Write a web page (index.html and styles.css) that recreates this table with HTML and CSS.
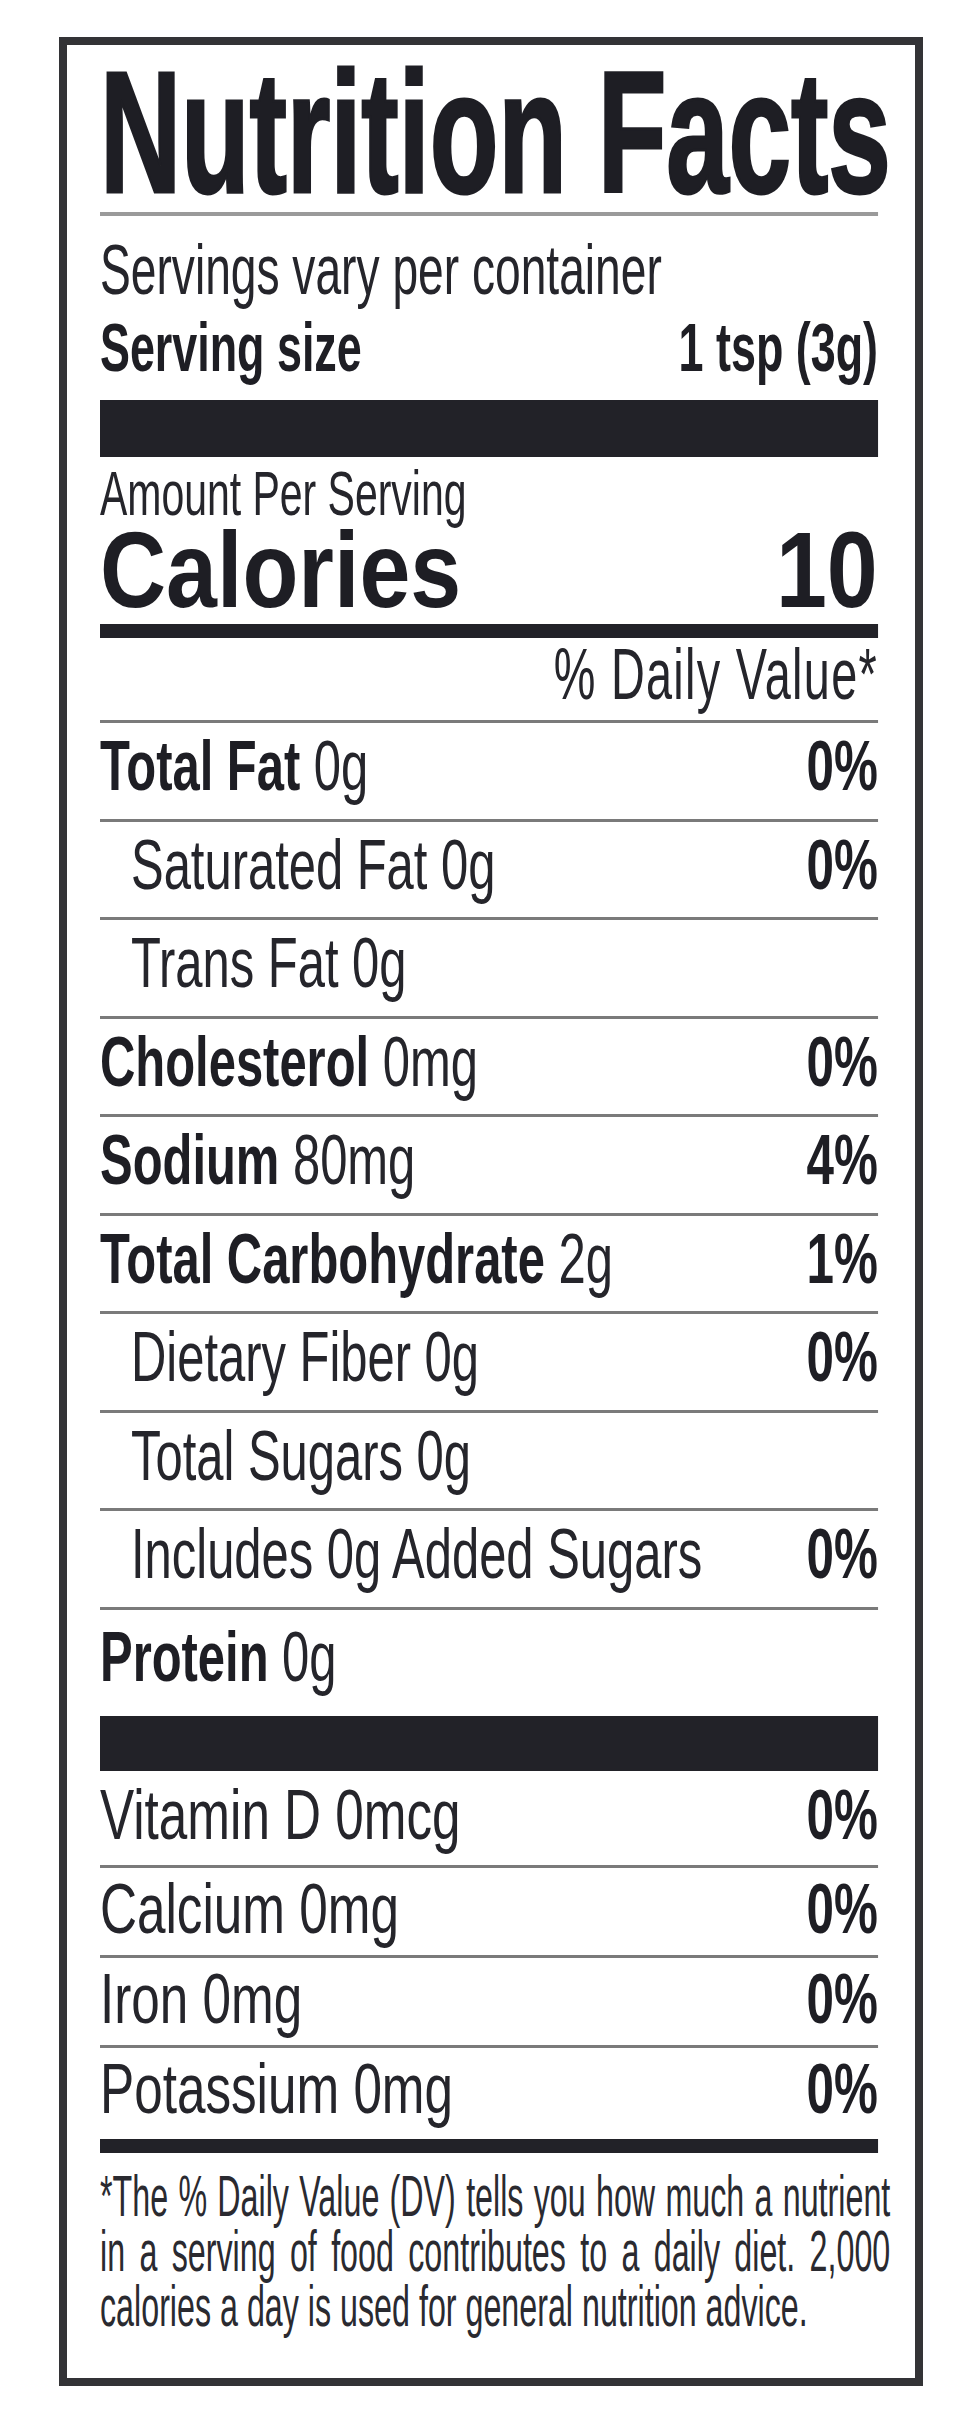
FILE: index.html
```html
<!DOCTYPE html>
<html lang="en">
<head>
<meta charset="utf-8">
<title>Nutrition Facts</title>
<link rel="stylesheet" href="styles.css">
</head>
<body>
<section class="label">
  <div class="panel">
    <h1 class="title">Nutrition Facts</h1>
    <div class="rule"></div>
    <div class="servings">
      <div class="serv-line">Servings vary per container</div>
      <div class="serv-size"><span>Serving size</span><span>1 tsp (3g)</span></div>
    </div>
    <div class="bar-xl"></div>
    <div class="amount">Amount Per Serving</div>
    <div class="calories"><span class="cal-l">Calories</span><span class="cal-r">10</span></div>
    <div class="bar-md"></div>
    <div class="dv">% Daily Value*</div>

    <div class="row"><span class="name"><b>Total Fat</b> 0g</span><span class="pct">0%</span></div>
    <div class="row ind"><span class="name">Saturated Fat 0g</span><span class="pct">0%</span></div>
    <div class="row ind"><span class="name">Trans Fat 0g</span><span class="pct"></span></div>
    <div class="row"><span class="name"><b>Cholesterol</b> 0mg</span><span class="pct">0%</span></div>
    <div class="row"><span class="name"><b>Sodium</b> 80mg</span><span class="pct">4%</span></div>
    <div class="row"><span class="name"><b>Total Carbohydrate</b> 2g</span><span class="pct">1%</span></div>
    <div class="row ind"><span class="name">Dietary Fiber 0g</span><span class="pct">0%</span></div>
    <div class="row ind"><span class="name">Total Sugars 0g</span><span class="pct"></span></div>
    <div class="row ind"><span class="name">Includes 0g Added Sugars</span><span class="pct">0%</span></div>
    <div class="row protein"><span class="name"><b>Protein</b> 0g</span><span class="pct"></span></div>

    <div class="bar-lg"></div>
    <div class="vit first"><span class="vname">Vitamin D 0mcg</span><span class="pct">0%</span></div>
    <div class="vit"><span class="vname">Calcium 0mg</span><span class="pct">0%</span></div>
    <div class="vit"><span class="vname">Iron 0mg</span><span class="pct">0%</span></div>
    <div class="vit last"><span class="vname">Potassium 0mg</span><span class="pct">0%</span></div>
    <div class="bar-md"></div>

    <p class="foot">
      <span class="j">*The % Daily Value (DV) tells you how much a nutrient</span>
      <span class="j">in a serving of food contributes to a daily diet. 2,000</span>
      <span>calories a day is used for general nutrition advice.</span>
    </p>
  </div>
</section>
</body>
</html>
```
FILE: styles.css
```css
html, body {
  margin: 0;
  padding: 0;
  background: #ffffff;
}

.label {
  box-sizing: border-box;
  width: 864px;
  margin: 37px 0 0 59px;
  border: 8px solid #333336;
  padding: 0 37px 0 33px;
  font-family: "Liberation Sans", Arial, sans-serif;
  color: #25252b;
}

.panel {
  width: 1196.9px;
  transform: scaleX(0.65);
  transform-origin: 0 0;
}

.title {
  margin: 0;
  font-size: 173px;
  font-weight: 700;
  line-height: 174px;
  height: 167px;
  letter-spacing: -0.3px;
  white-space: nowrap;
  color: #1e1e24;
  -webkit-text-stroke: 3px #1e1e24;
}

.rule {
  height: 4px;
  background: #9a9a9a;
}

.servings {
  padding: 14.7px 0 14.3px;
}

.serv-line {
  font-size: 71px;
  line-height: 78px;
  white-space: nowrap;
}

.serv-size {
  display: flex;
  justify-content: space-between;
  font-size: 69px;
  font-weight: 700;
  line-height: 77px;
  white-space: nowrap;
  color: #1e1e24;
}

.bar-xl {
  height: 57px;
  background: #222228;
}

.bar-md {
  height: 14px;
  background: #222228;
}

.bar-lg {
  height: 55px;
  background: #222228;
}

.amount {
  font-size: 63px;
  line-height: 66px;
  padding-top: 3px;
  white-space: nowrap;
}

.calories {
  display: flex;
  justify-content: space-between;
  font-size: 107.5px;
  font-weight: 700;
  line-height: 88px;
  padding-bottom: 10.5px;
  color: #1e1e24;
}

.calories span {
  display: inline-block;
  transform: scaleX(1.31);
}

.cal-l {
  transform-origin: left center;
}

.cal-r {
  transform-origin: right center;
}

.dv {
  text-align: right;
  font-size: 72px;
  line-height: 73px;
  letter-spacing: 2px;
  padding-bottom: 9px;
  white-space: nowrap;
}

.row {
  display: flex;
  justify-content: space-between;
  border-top: 3px solid #7a7a7a;
  font-size: 71px;
  line-height: 85.5px;
  padding-bottom: 10px;
  white-space: nowrap;
}

.row b {
  color: #1e1e24;
}

.row .name {
  transform: scaleX(1.06);
  transform-origin: left center;
}

.row.ind .name {
  padding-left: 45px;
}

.pct {
  font-weight: 700;
  color: #1e1e24;
  transform: scaleX(1.07);
  transform-origin: right center;
}

.row.protein {
  line-height: 94px;
  padding-bottom: 12.5px;
}

.vit {
  display: flex;
  justify-content: space-between;
  border-top: 3px solid #7a7a7a;
  font-size: 71px;
  line-height: 81px;
  padding-bottom: 6px;
  white-space: nowrap;
}

.vit .vname {
  transform: scaleX(1.11);
  transform-origin: left center;
}

.vit.first {
  border-top: 0;
  line-height: 88px;
}

.vit.last {
  padding-bottom: 10px;
}

.foot {
  margin: 0;
  width: 1422px;
  transform: scaleX(0.855);
  transform-origin: 0 0;
  font-size: 58px;
  line-height: 55px;
  padding: 15px 0 45px;
  color: #2a2a30;
}

.foot span {
  display: block;
  white-space: nowrap;
}

.foot .j {
  text-align: justify;
  text-align-last: justify;
}
```
